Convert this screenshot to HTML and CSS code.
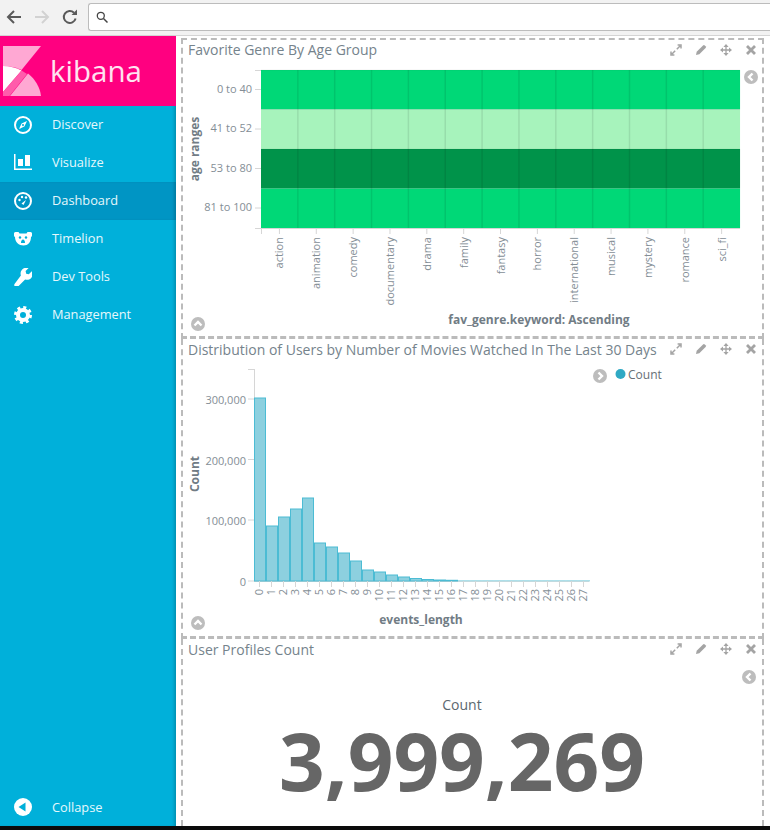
FILE: index.html
```html
<!DOCTYPE html>
<html lang="en">
<head>
    <meta charset="UTF-8">
    <meta name="viewport" content="width=device-width, initial-scale=1.0">
    <title>Dashboard - Kibana</title>
    <link rel="stylesheet" href="styles.css">
</head>
<body>
    <svg class="sprites" width="0" height="0">
        <symbol id="i-expand" viewBox="0 0 12 12">
            <path d="M6.8 5.2 10 2M7.6 1h3.4v3.4M5.2 6.8 2 10M1 7.600V11h3.400" fill="none" stroke="currentColor" stroke-width="1.500"/>
        </symbol>
        <symbol id="i-pencil" viewBox="0 0 12 12">
            <path d="M1 11l.7-3.300L8 1.400a1.300 1.300 0 0 1 1.800 0l.8.8a1.300 1.300 0 0 1 0 1.800L4.300 10.300z" fill="currentColor"/>
        </symbol>
        <symbol id="i-move" viewBox="0 0 12 12">
            <path d="M6 1v10M1 6h10" fill="none" stroke="currentColor" stroke-width="1.300"/>
            <path d="M6 0l2.600 3H3.400zM6 12l2.600-3H3.400zM0 6l3-2.600v5.200zM12 6l-3-2.600v5.200z" fill="currentColor"/>
        </symbol>
        <symbol id="i-close" viewBox="0 0 12 12">
            <path d="M2 2l8 8M10 2l-8 8" stroke="currentColor" stroke-width="2.800" fill="none"/>
        </symbol>
    </svg>

    <div class="browser-bar">
        <svg class="browser-icon" width="16" height="16" viewBox="0 0 16 16"><path d="M15 8H2M8 2 2 8l6 6" fill="none" stroke="#5a5a5a" stroke-width="2"/></svg>
        <svg class="browser-icon" width="16" height="16" viewBox="0 0 16 16"><path d="M1 8h13M8 2l6 6-6 6" fill="none" stroke="#d2d2d2" stroke-width="2"/></svg>
        <svg class="browser-icon" width="16" height="16" viewBox="0 0 16 16"><path d="M13.600 9.500A6 6 0 1 1 12 3.700" fill="none" stroke="#5a5a5a" stroke-width="2"/><path d="M9.500 6H15V.5z" fill="#5a5a5a"/></svg>
        <div class="url-box">
            <svg width="12" height="12" viewBox="0 0 12 12"><circle cx="4.800" cy="4.800" r="3.500" fill="none" stroke="#444" stroke-width="1.300"/><path d="M7.500 7.500 11.500 11.500" stroke="#444" stroke-width="1.500"/></svg>
        </div>
    </div>

    <div class="app">
        <nav class="sidebar">
            <div class="logo">
                <svg width="38" height="50" viewBox="0 0 38 50">
                    <path d="M0 0h38L18.500 24C12.500 21 6 20 0 20z" fill="#ffa8d3"/>
                    <path d="M0 20c6.500 0 13 1.500 18.500 4.500L0 46z" fill="#fff"/>
                    <path d="M18.500 24.500l5.500 3.500L6.500 50H0v-4z" fill="#ff5cab"/>
                    <path d="M25 27.500C32 33 37 41 38 50H7z" fill="#ffa8d3"/>
                </svg>
                <span class="logo-text">kibana</span>
            </div>
            <a class="nav-item">
                <svg class="nav-icon" viewBox="0 0 18 18"><circle cx="9" cy="9" r="8" fill="none" stroke="#fff" stroke-width="2"/><path d="M13 5 10.400 10.400 5 13l2.600-5.400zM9 8a1 1 0 1 0 .01 0z" fill="#fff" fill-rule="evenodd"/></svg>
                <span>Discover</span>
            </a>
            <a class="nav-item">
                <svg class="nav-icon" viewBox="0 0 18 18"><path d="M0 0h1.500v14.500H18V16H0zM4 5h5v7H4zM11 1h5v11h-5z" fill="#fff"/></svg>
                <span>Visualize</span>
            </a>
            <a class="nav-item active">
                <svg class="nav-icon" viewBox="0 0 18 18"><circle cx="9" cy="9" r="8" fill="none" stroke="#fff" stroke-width="2"/><circle cx="5.500" cy="8" r="1.200" fill="#fff"/><circle cx="8" cy="5" r="1.200" fill="#fff"/><circle cx="12" cy="5.500" r="1.200" fill="#fff"/><path d="M7.500 11.500 12 8l-2.500 5z" fill="#fff"/></svg>
                <span>Dashboard</span>
            </a>
            <a class="nav-item">
                <svg class="nav-icon" viewBox="0 0 18 18"><path d="M1.500 2h3l1 1.500h7l1-1.500h3c1 0 1.500.8 1.500 1.500v2c0 .8-.5 1.300-1 1.500 0 5-3 8.500-7.500 8.500S1 12 1 7c-.5-.2-1-.7-1-1.500v-2C0 2.800.5 2 1.500 2z" fill="#fff"/><circle cx="6" cy="7.500" r="1.200" fill="#00b0da"/><circle cx="12" cy="7.500" r="1.200" fill="#00b0da"/><path d="M7 13c0-2 .8-3.500 2-3.500s2 1.500 2 3.500z" fill="#00b0da"/></svg>
                <span>Timelion</span>
            </a>
            <a class="nav-item">
                <svg class="nav-icon" viewBox="0 0 18 18"><path d="M17.800 3.300l-3 3-2.600-.6-.6-2.600 3-3c-2.200-.8-4.700-.3-6.400 1.400-1.600 1.600-2 3.900-1.300 5.900L.9 15.400c-.9.9-.9 2.300 0 3.100s2.300.9 3.200 0l7-7c2 .7 4.300.3 5.900-1.300 1.700-1.700 2.200-4.700.8-6.900z" fill="#fff"/></svg>
                <span>Dev Tools</span>
            </a>
            <a class="nav-item">
                <svg class="nav-icon" viewBox="0 0 18 18"><circle cx="9" cy="9" r="5" fill="none" stroke="#fff" stroke-width="4"/><circle cx="9" cy="9" r="7.500" fill="none" stroke="#fff" stroke-width="3" stroke-dasharray="3 2.890"/></svg>
                <span>Management</span>
            </a>
            <a class="nav-item collapse">
                <svg class="nav-icon" viewBox="0 0 18 18"><circle cx="9" cy="9" r="9" fill="#fff"/><path d="M4.500 9 11.500 4.500v9z" fill="#00b0da"/></svg>
                <span>Collapse</span>
            </a>
        </nav>

        <main class="dashboard">
            <section class="panel panel-first">
                <header class="panel-head">
                    <h3 class="panel-title">Favorite Genre By Age Group</h3>
                    <div class="panel-actions" data-actions></div>
                </header>
                <svg class="chart" id="heatmap" width="579" height="276" viewBox="183 60 579 276"></svg>
            </section>

            <section class="panel">
                <header class="panel-head">
                    <h3 class="panel-title">Distribution of Users by Number of Movies Watched In The Last 30 Days</h3>
                    <div class="panel-actions" data-actions></div>
                </header>
                <svg class="chart" id="histogram" width="579" height="276" viewBox="183 360 579 276"></svg>
            </section>

            <section class="panel panel-last">
                <header class="panel-head">
                    <h3 class="panel-title">User Profiles Count</h3>
                    <div class="panel-actions" data-actions></div>
                </header>
                <svg class="toggle-left" width="14" height="14" viewBox="0 0 14 14"><circle cx="7" cy="7" r="7" fill="#bdbdbd"/><path d="M8.500 3.500 5 7l3.500 3.500" fill="none" stroke="#fff" stroke-width="2.400"/></svg>
                <div class="metric">
                    <div class="metric-label">Count</div>
                    <div class="metric-value">3,999,269</div>
                </div>
            </section>
        </main>
    </div>

    <script src="script.js"></script>
</body>
</html>
```

FILE: styles.css
```css
* {
    box-sizing: border-box;
}
body {
    margin: 0;
    height: 830px;
    overflow: hidden;
    background-color: #0b0b0b;
    font-family: "Open Sans", "Liberation Sans", sans-serif;
}
.sprites {
    position: absolute;
}
.browser-bar {
    display: flex;
    align-items: center;
    gap: 11px;
    height: 36px;
    padding: 0 0 2px 6px;
    background-color: #f2f2f2;
    border-bottom: 1px solid #d4d4d4;
}
.browser-icon {
    flex: none;
    margin-right: 1px;
}
.url-box {
    flex: 1;
    display: flex;
    align-items: center;
    height: 28px;
    margin-left: -2px;
    padding-left: 7px;
    background-color: #fff;
    border: 1px solid #bcbcbc;
    border-right: 0;
    border-radius: 3px 0 0 3px;
}
.app {
    display: flex;
    height: 790px;
    background-color: #fff;
}
.sidebar {
    flex: none;
    display: flex;
    flex-direction: column;
    width: 176px;
    background-color: #00b0da;
    box-shadow: inset -3px 0 3px -1px rgba(0, 0, 0, 0.18);
}
.logo {
    display: flex;
    align-items: center;
    gap: 9px;
    height: 70px;
    padding-left: 3px;
    background-color: #ff0080;
}
.logo-text {
    margin-top: -2px;
    color: #ffe3f1;
    font-size: 29.5px;
}
.nav-item {
    display: flex;
    align-items: center;
    gap: 20px;
    height: 38px;
    padding-left: 14px;
    color: #e6f8fc;
    font-size: 12.8px;
    font-weight: 500;
}
.nav-item span {
    margin-top: -2px;
}
.nav-item.active {
    background-color: #0095c4;
    box-shadow: inset -3px 0 3px -1px rgba(0, 0, 0, 0.18);
}
.nav-item.collapse {
    margin-top: auto;
}
.nav-item.collapse span {
    margin-top: 0;
}
.nav-icon {
    flex: none;
    width: 18px;
    height: 18px;
}
.dashboard {
    flex: none;
    width: 583px;
    margin: 2px 0 0 5px;
}
.panel {
    position: relative;
    height: 300px;
    border-left: 2px dashed #bbb;
    border-right: 2px dashed #bbb;
    border-bottom: 3px dashed #bbb;
}
.panel-first {
    height: 301px;
    border-top: 2px dashed #bbb;
}
.panel-first .panel-title {
    margin-top: -2px;
}
.panel-last {
    height: 187px;
    border-bottom: 0;
}
.panel-head {
    display: flex;
    align-items: center;
    justify-content: space-between;
    height: 20px;
    padding: 0 5px 0 5px;
}
.panel-title {
    margin: 0;
    color: #75838c;
    font-size: 14px;
    font-weight: 400;
    white-space: nowrap;
}
.panel-actions {
    display: flex;
    gap: 13px;
    color: #a4a4a4;
}
.panel-actions svg {
    display: block;
    width: 12px;
    height: 12px;
}
.chart {
    display: block;
}
.chart text {
    font-family: "Open Sans", "Liberation Sans", sans-serif;
    font-size: 11px;
    fill: #848e96;
}
.chart .axis-title {
    font-size: 12px;
    font-weight: 700;
    fill: #717c85;
}
.chart .legend-label {
    font-size: 12px;
    fill: #666f76;
}
.toggle-left {
    position: absolute;
    top: 31px;
    right: 6px;
}
.metric {
    padding: 36px 21px 0 0;
    text-align: center;
}
.metric-label {
    color: #5c6770;
    font-size: 14px;
}
.metric-value {
    color: #666;
    font-size: 80px;
    font-weight: 700;
    line-height: 92px;
}
```

FILE: script.js
```js
const SVG_NS = 'http://www.w3.org/2000/svg';

function add(parent, tag, attrs, text) {
    const el = document.createElementNS(SVG_NS, tag);
    for (const key in attrs) {
        el.setAttribute(key, attrs[key]);
    }
    if (text !== undefined) {
        el.textContent = text;
    }
    parent.appendChild(el);
    return el;
}

function tick(svg, x1, y1, x2, y2) {
    add(svg, 'line', { x1, y1, x2, y2, stroke: '#d6d6d6', 'stroke-width': 1 });
}

function verticalLabel(svg, x, y, text, cls, anchor) {
    add(svg, 'text', {
        x, y,
        transform: `rotate(-90 ${x} ${y})`,
        'text-anchor': anchor,
        class: cls || ''
    }, text);
}

// small round toggle with a chevron, dir is 1 (right), -1 (left), 0 (up)
function toggle(svg, cx, cy, dir) {
    add(svg, 'circle', { cx, cy, r: 7, fill: '#bdbdbd' });
    const d = dir === 0
        ? `M${cx - 3.5} ${cy + 1.5}l3.500 -3.500 3.500 3.500`
        : `M${cx - dir * 1.5} ${cy - 3.5}l${dir * 3.5} 3.500 ${-dir * 3.5} 3.500`;
    add(svg, 'path', { d, fill: 'none', stroke: '#fff', 'stroke-width': 2.4 });
}

function drawHeatmap() {
    const svg = document.getElementById('heatmap');
    const genres = ['action', 'animation', 'comedy', 'documentary', 'drama', 'family', 'fantasy',
        'horror', 'international', 'musical', 'mystery', 'romance', 'sci_fi'];
    const rows = [
        { label: '0 to 40', top: 70, color: '#00d877' },
        { label: '41 to 52', top: 109.5, color: '#a7f3bc' },
        { label: '53 to 80', top: 149, color: '#00934a' },
        { label: '81 to 100', top: 188.5, color: '#00d877' }
    ];
    const left = 261;
    const colWidth = 36.85;
    const width = colWidth * genres.length;

    rows.forEach(row => {
        add(svg, 'rect', { x: left, y: row.top, width, height: 39.5, fill: row.color });
        add(svg, 'text', { x: 252, y: row.top + 22.5, 'text-anchor': 'end' }, row.label);
        tick(svg, 255, row.top + 19.5, 261, row.top + 19.5);
        add(svg, 'line', { x1: left, y1: row.top, x2: left + width, y2: row.top, stroke: 'rgba(0,0,0,0.06)' });
    });
    tick(svg, 255, 70.500, 261, 70.500);
    tick(svg, 255, 228.500, left + width, 228.500);
    tick(svg, 261.500, 228, 261.500, 234);

    genres.forEach((genre, i) => {
        const center = left + colWidth * (i + 0.5);
        if (i > 0) {
            const x = left + colWidth * i;
            add(svg, 'line', { x1: x, y1: 70, x2: x, y2: 228, stroke: 'rgba(0,0,0,0.09)', 'stroke-width': 1.5 });
        }
        tick(svg, center, 228, center, 234);
        verticalLabel(svg, center + 4, 237, genre, '', 'end');
    });

    verticalLabel(svg, 199, 149, 'age ranges', 'axis-title', 'middle');
    add(svg, 'text', { x: 539, y: 324, 'text-anchor': 'middle', class: 'axis-title' }, 'fav_genre.keyword: Ascending');
    toggle(svg, 198, 324, 0);
    toggle(svg, 751, 77, -1);
}

function drawHistogram() {
    const svg = document.getElementById('histogram');
    const base = 582;
    const tops = [399, 527, 518, 510, 499, 544, 548, 554, 562, 571, 573, 576, 578, 579.5, 580.5, 581, 581.3];

    tick(svg, 254.500, 370, 254.500, base);
    tick(svg, 248, 370.500, 254, 370.500);
    tick(svg, 254, base + 0.5, 589, base + 0.5);

    [['300,000', 400], ['200,000', 460.5], ['100,000', 521], ['0', 582]].forEach(([label, y]) => {
        tick(svg, 248, y, 254, y);
        add(svg, 'text', { x: 246, y: y + 5, 'text-anchor': 'end' }, label);
    });

    for (let i = 0; i < 28; i++) {
        const x = 254 + i * 12;
        const top = i < tops.length ? tops[i] : 581.6;
        add(svg, 'rect', {
            x: x + 0.5, y: top, width: 11, height: base - top,
            fill: '#8dd0df', stroke: i < tops.length ? '#4cbcd4' : '#a9dde8', 'stroke-width': 1
        });
        tick(svg, x + 5.5, base, x + 5.5, base + 6);
        verticalLabel(svg, x + 9, 590, String(i), '', 'end');
    }

    verticalLabel(svg, 199, 475, 'Count', 'axis-title', 'middle');
    add(svg, 'text', { x: 421, y: 625, 'text-anchor': 'middle', class: 'axis-title' }, 'events_length');
    toggle(svg, 198, 624, 0);
    toggle(svg, 600, 377, 1);
    add(svg, 'circle', { cx: 620.5, cy: 375, r: 5, fill: '#2fa9c4' });
    add(svg, 'text', { x: 628, y: 380, class: 'legend-label' }, 'Count');
}

document.querySelectorAll('[data-actions]').forEach(box => {
    ['i-expand', 'i-pencil', 'i-move', 'i-close'].forEach(id => {
        const icon = add(box, 'svg', { viewBox: '0 0 12 12' });
        add(icon, 'use', { href: '#' + id });
    });
});

drawHeatmap();
drawHistogram();
```
